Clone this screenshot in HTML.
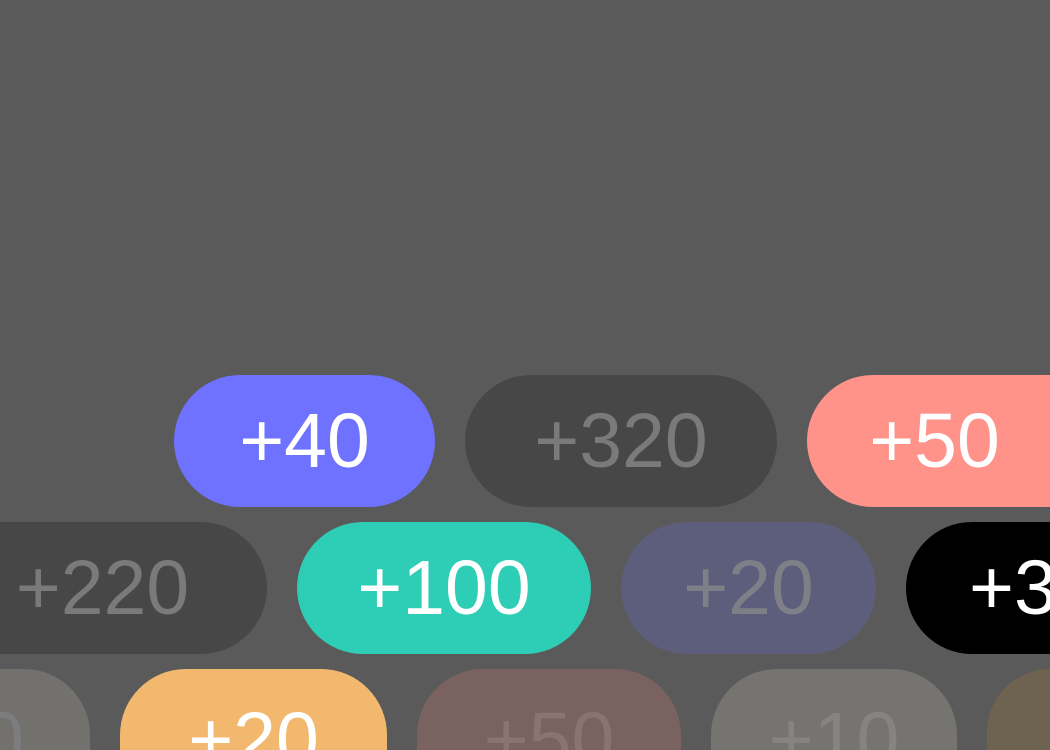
<!DOCTYPE html>
<html><head><meta charset="utf-8"><style>
html,body{margin:0;padding:0;width:1050px;height:750px;overflow:hidden}
body{background:#5a5a5a;position:relative;font-family:"Liberation Sans",sans-serif}
.p{position:absolute;height:132px;border-radius:66px;display:flex;align-items:center;justify-content:center;font-size:77px;color:#fff;white-space:nowrap;line-height:1;overflow:hidden}
</style></head><body>
<div class="p" style="left:174px;top:375px;width:261px;background:#6e72ff">+40</div>
<div class="p" style="left:465px;top:375px;width:312px;background:#474747;color:#7a7a7a">+320</div>
<div class="p" style="left:807px;top:375px;width:243px;border-radius:66px 0 0 66px;background:#ff938a"><span style="position:relative;left:6px">+50</span></div>

<div class="p" style="left:0;top:522px;width:267px;border-radius:0 66px 66px 0;background:#474747;color:#7a7a7a"><span style="position:relative;left:-31px">+220</span></div>
<div class="p" style="left:297px;top:522px;width:294px;background:#2ecdb5">+100</div>
<div class="p" style="left:621px;top:522px;width:255px;background:#5d5e7b;color:#7f7f88">+20</div>
<div class="p" style="left:906px;top:522px;width:144px;border-radius:66px 0 0 66px;background:#000;justify-content:flex-start"><span style="position:relative;left:63px">+30</span></div>

<div class="p" style="left:0;top:669px;width:90px;height:81px;border-radius:0 66px 0 0;background:#72716e;color:#7d7d80;align-items:flex-start;justify-content:flex-end"><span style="position:relative;right:66px;top:33px">0</span></div>
<div class="p" style="left:120px;top:669px;width:267px;height:81px;border-radius:66px 66px 0 0;background:#f2b96e;align-items:flex-start"><span style="position:relative;top:33px">+20</span></div>
<div class="p" style="left:417px;top:669px;width:264px;height:81px;border-radius:66px 66px 0 0;background:#7a6260;color:#8a7370;align-items:flex-start"><span style="position:relative;top:33px">+50</span></div>
<div class="p" style="left:711px;top:669px;width:246px;height:81px;border-radius:66px 66px 0 0;background:#767470;color:#858481;align-items:flex-start"><span style="position:relative;top:33px">+10</span></div>
<div class="p" style="left:987px;top:669px;width:63px;height:81px;border-radius:66px 0 0 0;background:#6e6350"></div>
</body></html>
